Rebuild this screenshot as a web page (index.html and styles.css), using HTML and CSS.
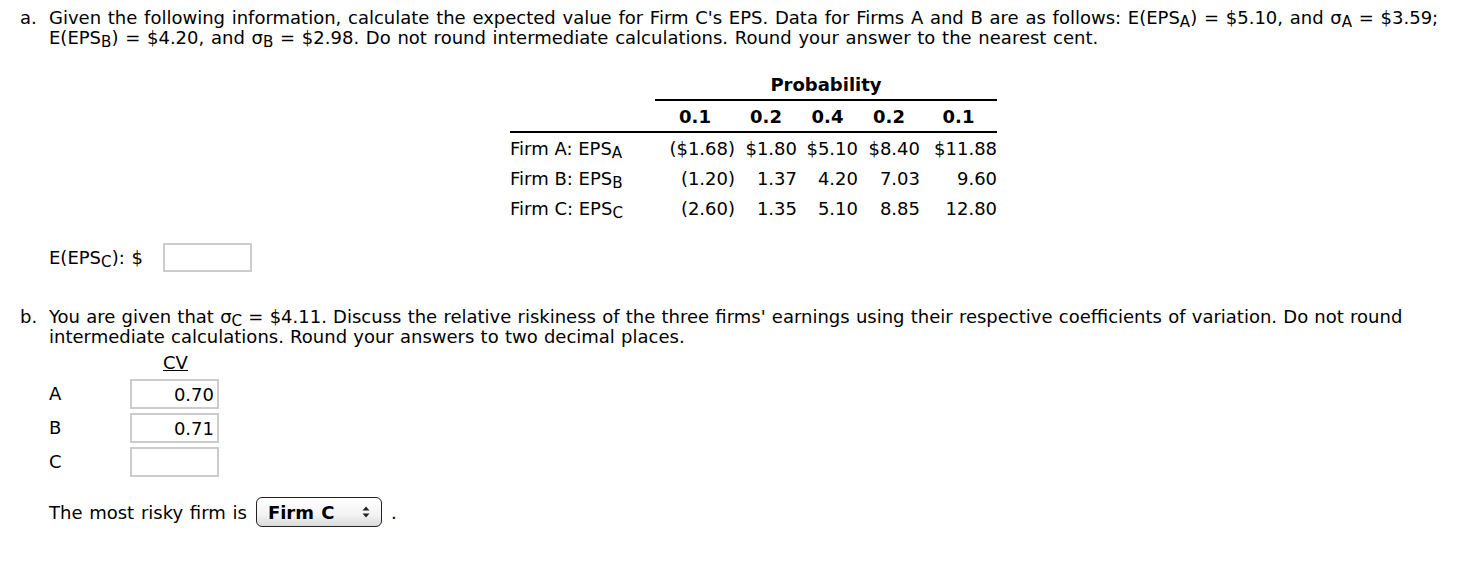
FILE: index.html
```html
<!DOCTYPE html>
<html>
<head>
<meta charset="utf-8">
<link rel="stylesheet" href="styles.css">
</head>
<body>
<div class="page">
  <div class="part">
    <div class="label">a.</div>
    <div class="body">
      <p class="q">Given the following information, calculate the expected value for Firm C's EPS. Data for Firms A and B are as follows: E(EPS<sub>A</sub>) = $5.10, and σ<sub>A</sub> = $3.59; E(EPS<sub>B</sub>) = $4.20, and σ<sub>B</sub> = $2.98. Do not round intermediate calculations. Round your answer to the nearest cent.</p>
      <table class="data">
        <colgroup>
          <col class="c0"><col class="c1"><col class="c2"><col class="c3"><col class="c4"><col class="c5">
        </colgroup>
        <thead>
          <tr><th class="blank"></th><th colspan="5" class="prob">Probability</th></tr>
          <tr class="probs"><th class="blank"></th><th>0.1</th><th>0.2</th><th>0.4</th><th>0.2</th><th>0.1</th></tr>
        </thead>
        <tbody>
          <tr><td class="name">Firm A: EPS<sub>A</sub></td><td>($1.68)</td><td>$1.80</td><td>$5.10</td><td>$8.40</td><td>$11.88</td></tr>
          <tr><td class="name">Firm B: EPS<sub>B</sub></td><td>(1.20)</td><td>1.37</td><td>4.20</td><td>7.03</td><td>9.60</td></tr>
          <tr><td class="name">Firm C: EPS<sub>C</sub></td><td>(2.60)</td><td>1.35</td><td>5.10</td><td>8.85</td><td>12.80</td></tr>
        </tbody>
      </table>
      <div class="answer">
        <span>E(EPS<sub>C</sub>): $</span>
        <span class="box wide"></span>
      </div>
    </div>
  </div>

  <div class="part partb">
    <div class="label">b.</div>
    <div class="body">
      <p class="q">You are given that σ<sub>C</sub> = $4.11. Discuss the relative riskiness of the three firms' earnings using their respective coefficients of variation. Do not round intermediate calculations. Round your answers to two decimal places.</p>
      <div class="cvgrid">
        <span></span><span class="cvhead">CV</span>
        <span class="rowlab">A</span><span class="box cv">0.70</span>
        <span class="rowlab">B</span><span class="box cv">0.71</span>
        <span class="rowlab">C</span><span class="box cv"></span>
      </div>
      <div class="risky">
        <span>The most risky firm is</span>
        <span class="select">Firm C<svg class="arrows" width="8" height="12" viewBox="0 0 8 12"><path d="M4 0.5 L7.5 4.5 L0.5 4.5 Z M4 11.5 L7.5 7.5 L0.5 7.5 Z" fill="#222"/></svg></span>
        <span>.</span>
      </div>
    </div>
  </div>
</div>
</body>
</html>
```

FILE: styles.css
```css
html, body {
  margin: 0;
  padding: 0;
  background: #fff;
}
body {
  font-family: "DejaVu Sans", Verdana, sans-serif;
  font-size: 18px;
  color: #000;
  word-spacing: 1px;
}
.page {
  padding: 8px 20px 0 20px;
}
.part {
  display: flex;
}
.label {
  width: 29px;
  flex: none;
  line-height: 20px;
}
.body {
  flex: 1;
}
.q {
  margin: 0;
  line-height: 20px;
}
.partb .q {
  word-spacing: 0.5px;
}
sub {
  font-size: 84%;
  vertical-align: -3px;
  line-height: 0;
}
.data {
  border-collapse: collapse;
  margin: 22px 0 0 461px;
  table-layout: fixed;
  width: 487px;
  word-spacing: 0;
}
.c0 { width: 145px; }
.c1 { width: 80px; }
.c2 { width: 62px; }
.c3 { width: 61px; }
.c4 { width: 62px; }
.c5 { width: 77px; }
.data th, .data td {
  padding: 0;
  height: 30px;
  white-space: nowrap;
}
.data th.prob {
  border-bottom: 2px solid #000;
  height: 28px;
  font-weight: bold;
  text-align: center;
}
.data tr.probs th {
  font-weight: bold;
  border-bottom: 2px solid #000;
  height: 30px;
  text-align: center;
}
.data td {
  text-align: right;
  height: 29px;
  padding-top: 1px;
}
.data td.name {
  text-align: left;
}
.answer {
  display: flex;
  align-items: center;
  gap: 20px;
  margin-top: 20px;
}
.box {
  display: inline-block;
  box-sizing: border-box;
  border: 2px solid #cccccc;
  background: #fff;
}
.box.wide {
  width: 89px;
  height: 29px;
}
.partb {
  margin-top: 35px;
}
.cvgrid {
  display: grid;
  grid-template-columns: 81px 89px;
  row-gap: 4px;
  margin-top: 6px;
  align-items: center;
}
.cvhead {
  text-decoration: underline;
  text-align: center;
  line-height: 20px;
  padding-left: 2px;
  margin-bottom: 2px;
}
.rowlab {
  line-height: 20px;
}
.box.cv {
  height: 30px;
  text-align: right;
  padding-right: 3px;
  line-height: 27px;
}
.risky {
  display: flex;
  align-items: center;
  gap: 9px;
  margin-top: 20px;
}
.select {
  box-sizing: border-box;
  width: 126px;
  height: 30px;
  border: 1px solid #222;
  border-radius: 6px;
  background: linear-gradient(#ffffff, #f3f3f3 60%, #dadada);
  font-weight: bold;
  display: flex;
  align-items: center;
  justify-content: space-between;
  padding: 0 11px 0 11px;
}
.arrows {
  display: block;
}
```
